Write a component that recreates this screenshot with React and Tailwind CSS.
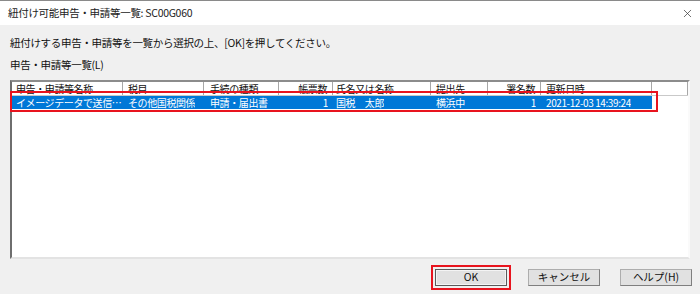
import { X } from 'lucide-react';

const font = { fontFamily: '"Noto Sans CJK JP", "Noto Sans", sans-serif' };

const columns = [
  { title: '申告・申請等名称', w: 'w-[111px]', pl: 'pl-[4px]', cell: 'イメージデータで送信可能な申告・申請等' },
  { title: '税目', w: 'w-[81px]', pl: 'pl-[5px]', cell: 'その他国税関係' },
  { title: '手続の種類', w: 'w-[75px]', pl: 'pl-[6px]', cell: '申請・届出書' },
  { title: '帳票数', w: 'w-[54px]', right: true, cell: '1' },
  { title: '氏名又は名称', w: 'w-[98px]', pl: 'pl-[3px]', cell: '国税　太郎' },
  { title: '提出先', w: 'w-[57px]', pl: 'pl-[5px]', cell: '横浜中' },
  { title: '署名数', w: 'w-[53px]', right: true, cell: '1' },
  { title: '更新日時', w: 'w-[111px]', pl: 'pl-[5px]', cell: '2021-12-03 14:39:24' },
];

function Button({ label, isDefault }) {
  return (
    <button
      className={
        'w-[72px] h-[17px] flex items-center justify-center text-[10.5px] leading-none text-[#111] bg-[#e1e1e1] ' +
        (isDefault
          ? 'border border-[#5a5a5a] shadow-[inset_0_0_0_1px_#f4f4f4]'
          : 'border border-[#adadad] border-r-[#7f7f7f] border-b-[#7f7f7f]')
      }
    >
      {label}
    </button>
  );
}

export default function App() {
  return (
    <div className="w-[700px] h-[294px] bg-[#f0f0f0] flex flex-col border-t border-[#8a8a8a] overflow-hidden" style={font}>
      {/* Title bar */}
      <div className="h-[24px] bg-white flex items-center justify-between pl-[8px] pr-[6px] shrink-0">
        <span className="text-[10.5px] text-[#222] tracking-[-0.3px]">紐付け可能申告・申請等一覧: SC00G060</span>
        <X className="w-[13px] h-[13px] text-[#333]" strokeWidth={1.3} />
      </div>

      <div className="flex-1 flex flex-col px-[10px] pt-[10px]">
        <p className="text-[10.5px] leading-[16px] text-[#111] tracking-[-0.3px]">
          紐付けする申告・申請等を一覧から選択の上、[OK]を押してください。
        </p>
        <p className="mt-[6px] text-[10.5px] leading-[16px] text-[#111] tracking-[-0.3px]">申告・申請等一覧(L)</p>

        {/* List */}
        <div className="relative mt-[7px] h-[179px] bg-white border-2 border-t-[#8c8c8c] border-l-[#6e6e6e] border-r-[#fafafa] border-b-[#e3e3e3] flex flex-col">
          <div className="flex h-[14px] border-b border-[#c9c9c9] bg-white">
            {columns.map((c) => (
              <div
                key={c.title}
                className={`${c.w} shrink-0 border-r border-[#a7a7a7] flex items-center text-[10px] leading-[13px] tracking-[-0.4px] text-[#111] whitespace-nowrap ${
                  c.right ? 'justify-end pr-[5px]' : c.pl
                }`}
              >
                {c.title}
              </div>
            ))}
            <div className="flex-1 border-r border-[#a7a7a7]" />
          </div>

          <div className="flex h-[13px]">
            <div className="flex bg-[#0078d7] text-white">
              {columns.map((c) => (
                <div
                  key={c.title}
                  className={`${c.w} shrink-0 flex items-center text-[10px] leading-[13px] tracking-[-0.4px] whitespace-nowrap ${
                    c.right ? 'justify-end pr-[5px]' : c.pl
                  }`}
                >
                  <span className="truncate">{c.cell}</span>
                </div>
              ))}
            </div>
          </div>

          {/* highlight annotation */}
          <div className="absolute left-[-2px] top-[9px] w-[648px] h-[21px] border-[2px] border-[#e8141e] pointer-events-none" />
        </div>

        {/* Buttons */}
        <div className="flex justify-end items-center mt-[6px] mr-[-2px]">
          <div className="p-[2px] border-[2px] border-[#e8141e]">
            <Button label="OK" isDefault />
          </div>
          <div className="ml-[17px]">
            <Button label="キャンセル" />
          </div>
          <div className="ml-[20px]">
            <Button label="ヘルプ(H)" />
          </div>
        </div>
      </div>
    </div>
  );
}
